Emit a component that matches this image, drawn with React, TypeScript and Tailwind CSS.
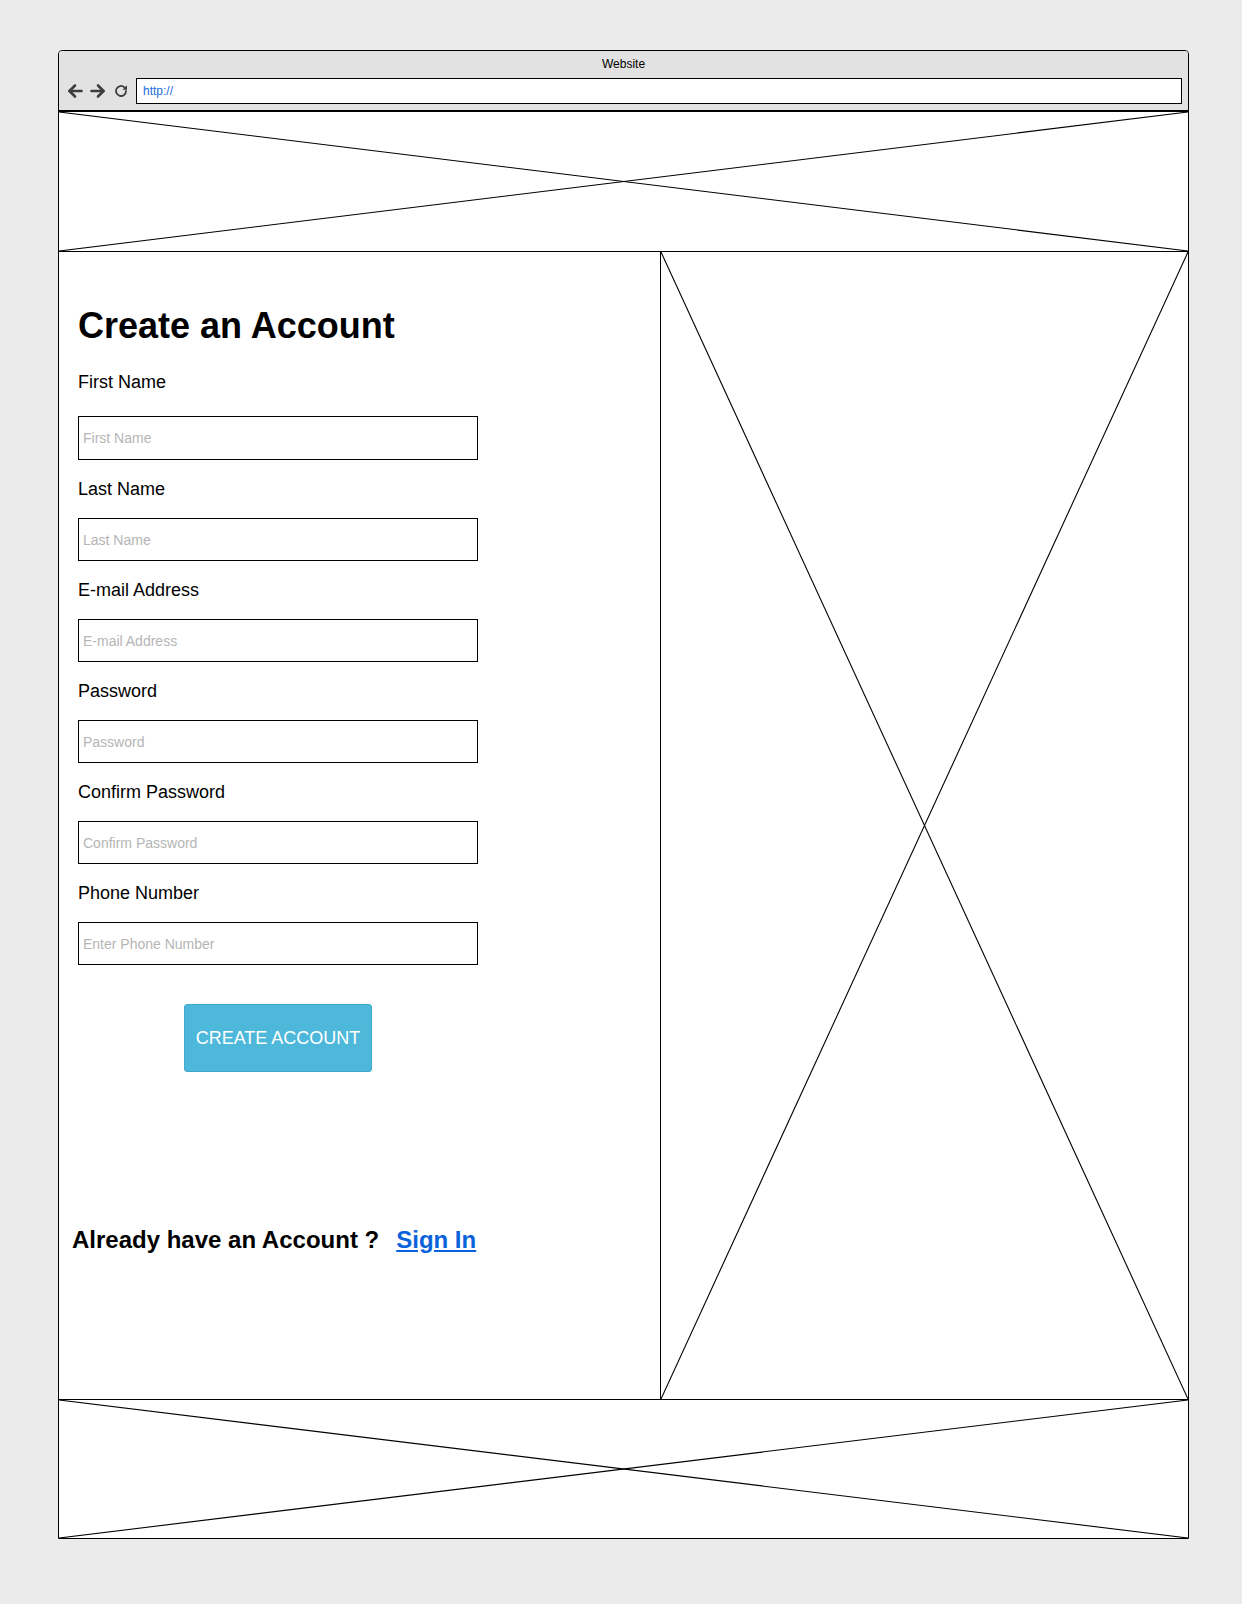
import React from "react";

// placeholder image box with a cross, like in wireframes
function CrossBox({ className }: { className: string }) {
  return (
    <div className={className}>
      <svg className="block w-full h-full" viewBox="0 0 100 100" preserveAspectRatio="none">
        <line x1="0" y1="0" x2="100" y2="100" stroke="#000" strokeWidth="1.1" vectorEffect="non-scaling-stroke" />
        <line x1="100" y1="0" x2="0" y2="100" stroke="#000" strokeWidth="1.1" vectorEffect="non-scaling-stroke" />
      </svg>
    </div>
  );
}

function NavIcons() {
  return (
    <div className="flex items-center gap-[7px] text-[#3e3e3e]">
      <svg width="16" height="16" viewBox="0 0 16 16" fill="none" stroke="currentColor" strokeWidth="2.6" strokeLinecap="round" strokeLinejoin="round">
        <path d="M14.5 8H2.5" />
        <path d="M8 2.5 2.5 8 8 13.5" />
      </svg>
      <svg width="16" height="16" viewBox="0 0 16 16" fill="none" stroke="currentColor" strokeWidth="2.6" strokeLinecap="round" strokeLinejoin="round">
        <path d="M1.5 8h12" />
        <path d="M8 2.5 13.5 8 8 13.5" />
      </svg>
      <svg width="16" height="16" viewBox="0 0 16 16" fill="none">
        <path d="M13 8a5 5 0 1 1-1.6-3.7" stroke="currentColor" strokeWidth="1.8" strokeLinecap="round" />
        <path d="M14 2.2v4.6H9.4z" fill="currentColor" />
      </svg>
    </div>
  );
}

const fields = [
  { label: "First Name", placeholder: "First Name" },
  { label: "Last Name", placeholder: "Last Name" },
  { label: "E-mail Address", placeholder: "E-mail Address" },
  { label: "Password", placeholder: "Password" },
  { label: "Confirm Password", placeholder: "Confirm Password" },
  { label: "Phone Number", placeholder: "Enter Phone Number" },
];

export default function App() {
  return (
    <div className="bg-[#ebebeb] min-h-[1604px] w-full pt-[50px] pl-[58px] font-['Liberation_Sans',Arial,sans-serif]">
      <div className="w-[1131px] h-[1489px] border border-black rounded-t-[4px] bg-white flex flex-col overflow-hidden">
        {/* browser bar */}
        <div className="bg-[#e2e2e2] h-[61px] border-b-2 border-black flex flex-col shrink-0">
          <div className="pt-[5px] text-center text-[12px] leading-[16px] text-black">Website</div>
          <div className="flex items-center mt-[6px] pl-[8px] pr-[6px]">
            <NavIcons />
            <div className="ml-[7px] flex-1 h-[26px] border border-black bg-white flex items-center pl-[6px] text-[12px] text-[#1a6ddb]">
              http://
            </div>
          </div>
        </div>

        {/* header */}
        <CrossBox className="h-[140px] border-b border-black shrink-0" />

        {/* main */}
        <div className="flex h-[1148px] border-b border-black shrink-0">
          <div className="w-[602px] border-r border-black px-[19px] flex flex-col">
            <h1 className="mt-[56px] text-[36px] leading-[36px] font-bold text-black">Create an Account</h1>
            {fields.map((f, i) => (
              <div key={f.label} className="flex flex-col">
                <label className={`${i === 0 ? "mt-[28px]" : "mt-[19px]"} text-[18px] leading-[20px] text-black`}>
                  {f.label}
                </label>
                <input
                  placeholder={f.placeholder}
                  className={`${i === 0 ? "mt-[24px] h-[44px]" : "mt-[19px] h-[43px]"} w-[400px] border border-black px-[4px] text-[14px] outline-none placeholder:text-[#b5b5b5]`}
                />
              </div>
            ))}
            <button className="mt-[39px] ml-[106px] w-[188px] h-[68px] bg-[#4db8da] border border-[#41a9cc] rounded-[3px] text-white text-[18px]">
              CREATE ACCOUNT
            </button>
            <div className="mt-[154px] -ml-[6px] flex items-baseline gap-[17px]">
              <span className="text-[24px] leading-[28px] font-bold text-black">Already have an Account ?</span>
              <a href="#" className="text-[24px] leading-[28px] font-bold text-[#0b63db] underline">
                Sign In
              </a>
            </div>
          </div>
          <CrossBox className="flex-1" />
        </div>

        {/* footer */}
        <CrossBox className="h-[138px] shrink-0" />
      </div>
    </div>
  );
}
